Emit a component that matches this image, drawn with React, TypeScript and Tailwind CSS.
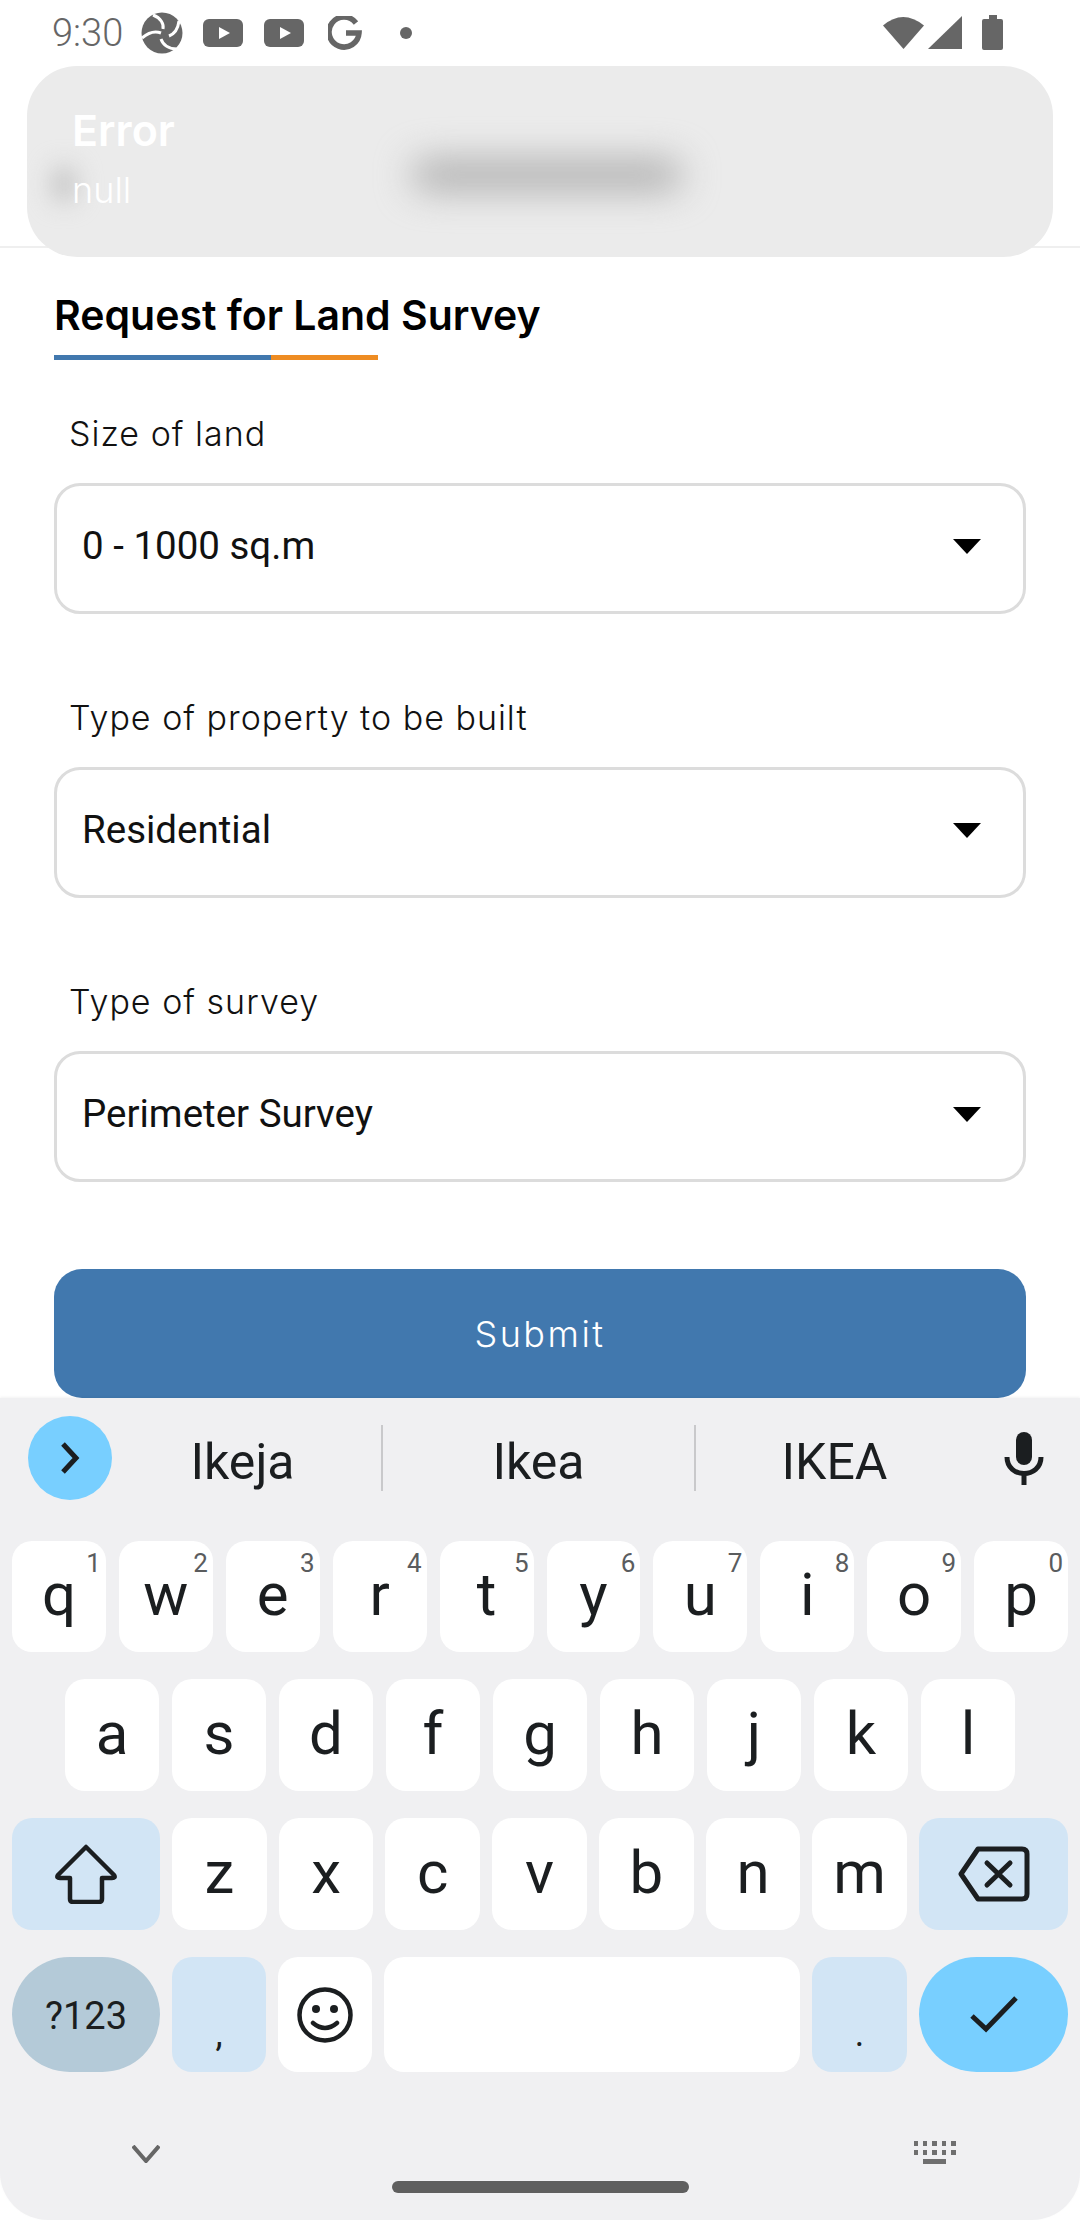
const row1 = [
  ["q", "1"],
  ["w", "2"],
  ["e", "3"],
  ["r", "4"],
  ["t", "5"],
  ["y", "6"],
  ["u", "7"],
  ["i", "8"],
  ["o", "9"],
  ["p", "0"],
];
const row2 = ["a", "s", "d", "f", "g", "h", "j", "k", "l"];
const row3 = ["z", "x", "c", "v", "b", "n", "m"];

function Key({ label, hint }: { label: string; hint?: string }) {
  return (
    <div className="relative flex h-full flex-1 items-center justify-center rounded-[20px] bg-white pb-[3px] font-['Roboto',sans-serif] text-[60px] leading-none text-[#1b1e20]">
      {label}
      {hint && (
        <span className="absolute top-[7px] right-[5px] text-[26px] leading-[30px] text-[#5a5c5e]">
          {hint}
        </span>
      )}
    </div>
  );
}

function Field({ label, value, className }: { label: string; value: string; className: string }) {
  return (
    <div className={className}>
      <p className="pl-[15px] font-['Inter',sans-serif] text-[34px] leading-[40px] font-light tracking-[1px] text-[#111]">
        {label}
      </p>
      <div className="mt-[29px] flex h-[131px] items-center justify-between rounded-[26px] border-[3px] border-[#dcdcdc] pr-[42px] pl-[25px]">
        <span className="-mt-[6px] font-['Roboto',sans-serif] text-[38.5px] text-[#111]">{value}</span>
        <svg width="28" height="16" viewBox="0 0 28 16" className="-mt-[4px]">
          <path d="M0 0H28L14 15Z" fill="#000" />
        </svg>
      </div>
    </div>
  );
}

export default function App() {
  return (
    <div className="relative flex h-[2220px] w-[1080px] flex-col overflow-hidden bg-white">
      {/* status bar */}
      <div className="flex h-[66px] shrink-0 items-center pr-[77px] pl-[52px] text-[#666]">
        <span className="w-[89px] font-['Roboto',sans-serif] text-[38px] leading-none font-light">9:30</span>
        <svg width="42" height="42" viewBox="0 0 42 42" className="-mt-[1px]">
          <circle cx="21" cy="21" r="20.5" fill="#666" />
          <path d="M1 26C8 20 15 19 20 21M12 3C20 6 23 12 22 17M38 9C37 17 33 22 28 24M36 37C28 37 22 33 20 27" stroke="#fff" strokeWidth="3" fill="none" />
        </svg>
        <svg width="40" height="28" viewBox="0 0 40 28" className="ml-[20px]">
          <rect width="40" height="28" rx="6" fill="#666" />
          <path d="M16 8L27 14L16 20Z" fill="#fff" />
        </svg>
        <svg width="40" height="28" viewBox="0 0 40 28" className="ml-[21px]">
          <rect width="40" height="28" rx="6" fill="#666" />
          <path d="M16 8L27 14L16 20Z" fill="#fff" />
        </svg>
        <svg width="34" height="34" viewBox="0 0 34 34" className="ml-[24px]">
          <path d="M28 7A15 15 0 1 0 31 17H18" stroke="#666" strokeWidth="5.5" fill="none" />
        </svg>
        <span className="ml-[38px] h-[12px] w-[12px] rounded-full bg-[#666]" />
        <div className="flex-1" />
        <svg width="120" height="36" viewBox="0 0 120 36">
          <path d="M0 10.5Q20 -6.5 41 10.5L20.5 34Z" fill="#666" />
          <path d="M45 34L79 1V34Z" fill="#666" />
          <path d="M106 0H114V4H118Q120 4 120 6V33Q120 35 118 35H101Q99 35 99 33V6Q99 4 101 4H106Z" fill="#666" />
        </svg>
      </div>

      {/* app bar, covered by the toast */}
      <div className="h-[182px] shrink-0 border-b-2 border-[#efefef]" />

      {/* form */}
      <div className="min-h-0 flex-1 px-[54px]">
        <h1 className="mt-[42px] font-['Inter',sans-serif] text-[41px] leading-[50px] font-semibold text-black">
          Request for Land Survey
        </h1>
        <div className="mt-[15px] flex h-[5px]">
          <div className="w-[217px] bg-[#4178ae]" />
          <div className="w-[107px] bg-[#ee8c22]" />
        </div>
        <Field className="mt-[54px]" label="Size of land" value="0 - 1000 sq.m" />
        <Field className="mt-[84px]" label="Type of property to be built" value="Residential" />
        <Field className="mt-[84px]" label="Type of survey" value="Perimeter Survey" />
        <button className="mt-[87px] flex h-[129px] w-full items-center justify-center rounded-[28px] bg-[#4178ae] font-['Inter',sans-serif] text-[36px] font-light tracking-[2.5px] text-white">
          Submit
        </button>
      </div>

      {/* keyboard */}
      <div className="h-[822px] shrink-0 rounded-b-[48px] bg-[#f0f0f2] px-[12px] pt-[18px] shadow-[0_-1px_3px_rgba(0,0,0,0.05)]">
        <div className="flex h-[84px] items-center font-['Roboto',sans-serif] text-[50px] text-[#1b1e20]">
          <div className="ml-[16px] flex h-[84px] w-[84px] items-center justify-center rounded-full bg-[#78cfff]">
            <svg width="22" height="34" viewBox="0 0 22 34">
              <path d="M4 3L17 17L4 31" stroke="#1b1e20" strokeWidth="5" fill="none" />
            </svg>
          </div>
          <div className="w-[269px] pt-[8px] pr-[8px] text-center">Ikeja</div>
          <div className="h-[66px] w-[2px] bg-[#c9c9cb]" />
          <div className="w-[311px] pt-[8px] text-center">Ikea</div>
          <div className="h-[66px] w-[2px] bg-[#c9c9cb]" />
          <div className="w-[277px] pt-[8px] text-center">IKEA</div>
          <svg width="40" height="54" viewBox="0 0 40 54" className="ml-[31px]">
            <rect x="12" y="1" width="16" height="33" rx="8" fill="#1b1e20" />
            <path d="M3 26C3 48 37 48 37 26" stroke="#1b1e20" strokeWidth="5" fill="none" />
            <path d="M20 41V54" stroke="#1b1e20" strokeWidth="5" />
          </svg>
        </div>

        <div className="mt-[41px] flex h-[111px] gap-[13px]">
          {row1.map(([l, h]) => (
            <Key key={l} label={l} hint={h} />
          ))}
        </div>
        <div className="mt-[27px] flex h-[112px] gap-[13px] px-[53px]">
          {row2.map((l) => (
            <Key key={l} label={l} />
          ))}
        </div>
        <div className="mt-[27px] flex h-[112px] gap-[12px]">
          <div className="flex w-[148px] items-center justify-center rounded-[20px] bg-[#d2e5f5]">
            <svg width="64" height="60" viewBox="0 0 64 60">
              <path d="M32 3L60 31Q62 34 58 34H48V55Q48 58 45 58H19Q16 58 16 55V34H6Q2 34 4 31Z" stroke="#1b1e20" strokeWidth="4.5" fill="none" strokeLinejoin="round" />
            </svg>
          </div>
          {row3.map((l) => (
            <Key key={l} label={l} />
          ))}
          <div className="flex w-[149px] items-center justify-center rounded-[20px] bg-[#d2e5f5]">
            <svg width="72" height="56" viewBox="0 0 72 56">
              <path d="M20 3H64Q69 3 69 8V48Q69 53 64 53H20L3 28Z" stroke="#1b1e20" strokeWidth="5" fill="none" strokeLinejoin="round" />
              <path d="M29 17L52 39M52 17L29 39" stroke="#1b1e20" strokeWidth="5" strokeLinecap="round" />
            </svg>
          </div>
        </div>
        <div className="mt-[27px] flex h-[115px] gap-[12px]">
          <div className="flex w-[148px] items-center justify-center rounded-full bg-[#b4cad8] pt-[3px] font-['Roboto',sans-serif] text-[38px] text-[#1b1e20]">
            ?123
          </div>
          <div className="flex w-[94px] items-end justify-center rounded-[20px] bg-[#d2e5f5] pb-[20px] font-['Roboto',sans-serif] text-[36px] leading-none text-[#1b1e20]">
            ,
          </div>
          <div className="flex w-[94px] items-center justify-center rounded-[20px] bg-white">
            <svg width="56" height="56" viewBox="0 0 56 56">
              <circle cx="28" cy="28" r="25.5" stroke="#1b1e20" strokeWidth="4.5" fill="none" />
              <circle cx="19" cy="22" r="4" fill="#1b1e20" />
              <circle cx="37" cy="22" r="4" fill="#1b1e20" />
              <path d="M16 36Q28 46 40 36" stroke="#1b1e20" strokeWidth="4.5" fill="none" strokeLinecap="round" />
            </svg>
          </div>
          <div className="flex-1 rounded-[20px] bg-white" />
          <div className="flex w-[95px] items-end justify-center rounded-[20px] bg-[#d2e5f5] pb-[20px] font-['Roboto',sans-serif] text-[36px] leading-none text-[#1b1e20]">
            .
          </div>
          <div className="flex w-[149px] items-center justify-center rounded-full bg-[#78cfff]">
            <svg width="48" height="37" viewBox="0 0 48 37">
              <path d="M2 20L16 33L46 2" stroke="#1b1e20" strokeWidth="5" fill="none" />
            </svg>
          </div>
        </div>

        {/* nav row */}
        <div className="mt-[69px] flex items-start justify-between pr-[112px] pl-[120px]">
          <svg width="28" height="18" viewBox="0 0 28 18" className="mt-[4px]">
            <path d="M1 1L14 16L27 1" stroke="#666" strokeWidth="4" fill="none" />
          </svg>
          <svg width="42" height="24" viewBox="0 0 42 24">
            <path d="M0 0h4v5H0zM9 0h4v5H9zM18 0h5v5h-5zM28 0h4v5h-4zM37 0h5v5h-5zM0 9h4v5H0zM9 9h4v5H9zM18 9h5v5h-5zM28 9h4v5h-4zM37 9h5v5h-5zM9 18h23v5H9z" fill="#6f6f6f" />
          </svg>
        </div>
        <div className="mx-auto mt-[16px] h-[12px] w-[297px] rounded-full bg-[#5f5f5f]" />
      </div>

      {/* error toast */}
      <div className="absolute top-[66px] left-[27px] h-[191px] w-[1026px] overflow-hidden rounded-[50px] bg-[#ebebeb]">
        <div className="absolute top-[100px] left-[25px] h-[36px] w-[24px] rounded-full bg-[#c4c4c4] blur-[12px]" />
        <div className="absolute top-[94px] left-[385px] h-[30px] w-[270px] rounded-full bg-[#acacac] blur-[18px]" />
        <div className="relative pt-[39px] pl-[45px] font-['Inter',sans-serif] text-white">
          <p className="text-[43px] leading-[50px] font-semibold">Error</p>
          <p className="mt-[15px] text-[36px] leading-[40px] font-light">null</p>
        </div>
      </div>
    </div>
  );
}
